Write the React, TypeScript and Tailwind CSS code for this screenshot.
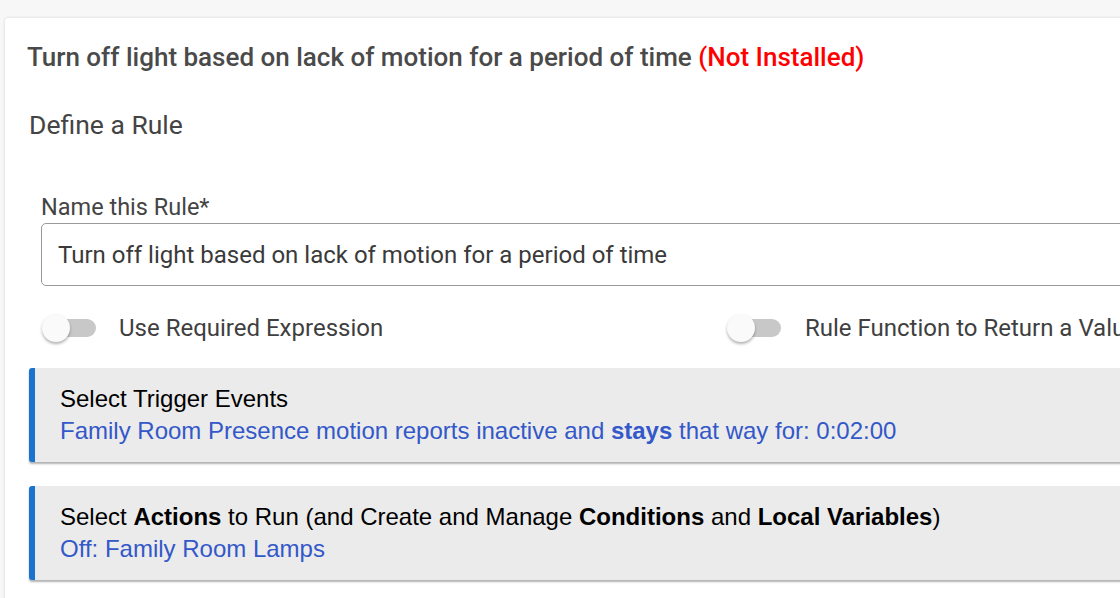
import React from "react";

function Toggle() {
  return (
    <div className="relative h-[28px] w-[54px] shrink-0">
      <div className="absolute left-[3px] top-[5px] h-[18px] w-[51px] rounded-full bg-[#c8c8c8]" />
      <div className="absolute left-0 top-0 h-[28px] w-[28px] rounded-full bg-[#fafafa] shadow-[0_2px_3px_rgba(0,0,0,0.3)]" />
    </div>
  );
}

function RuleSection({ title, detail }: { title: React.ReactNode; detail: React.ReactNode }) {
  return (
    <div className="ml-[24px] flex h-[94px] flex-col justify-center rounded-l-[3px] border-l-[6px] border-[#1a73cf] bg-[#ebebeb] pl-[25px] shadow-[0_2px_2px_rgba(0,0,0,0.3)] font-['Liberation_Sans',Arial,sans-serif] text-[24px] leading-[32px]">
      <div className="text-black">{title}</div>
      <div className="text-[#3358c9]">{detail}</div>
    </div>
  );
}

export default function App() {
  return (
    <div className="h-[598px] w-[1120px] overflow-hidden bg-[#f7f7f7] pl-[5px] pt-[18px] font-['Roboto',sans-serif]">
      <div className="h-[600px] w-[1200px] rounded-tl-[3px] bg-white shadow-[0_0_3px_rgba(0,0,0,0.15)]">
        <h1 className="whitespace-nowrap pl-[22px] pt-[21px] text-[26px] font-medium leading-[36px] text-[#4a4a4a]">
          Turn off light based on lack of motion for a period of time{" "}
          <span className="text-[#ff0000]">(Not Installed)</span>
        </h1>
        <div className="mt-[33px] pl-[24px] text-[26.5px] leading-[34px] text-[#444]">Define a Rule</div>

        <div className="mt-[51px] pl-[36px]">
          <div className="text-[23.5px] leading-[28px] text-[#444]">Name this Rule*</div>
          <div className="mt-[2px] flex h-[63px] items-center rounded-[5px] border border-[#9a9a9a] pl-[16px] text-[24px] text-[#3a3a3a]">
            Turn off light based on lack of motion for a period of time
          </div>
        </div>

        <div className="mt-[27px] flex items-center pl-[37px] text-[24px] leading-[30px] text-[#3f3f3f]">
          <div className="flex w-[685px] items-center gap-[23px]">
            <Toggle />
            <span>Use Required Expression</span>
          </div>
          <div className="flex items-center gap-[24px]">
            <Toggle />
            <span className="whitespace-nowrap">Rule Function to Return a Value</span>
          </div>
        </div>

        <div className="mt-[25px] flex flex-col gap-[24px]">
          <RuleSection
            title="Select Trigger Events"
            detail={
              <>
                Family Room Presence motion reports inactive and <b>stays</b> that way for: 0:02:00
              </>
            }
          />
          <RuleSection
            title={
              <>
                Select <b>Actions</b> to Run (and Create and Manage <b>Conditions</b> and <b>Local Variables</b>)
              </>
            }
            detail="Off: Family Room Lamps"
          />
        </div>
      </div>
    </div>
  );
}
